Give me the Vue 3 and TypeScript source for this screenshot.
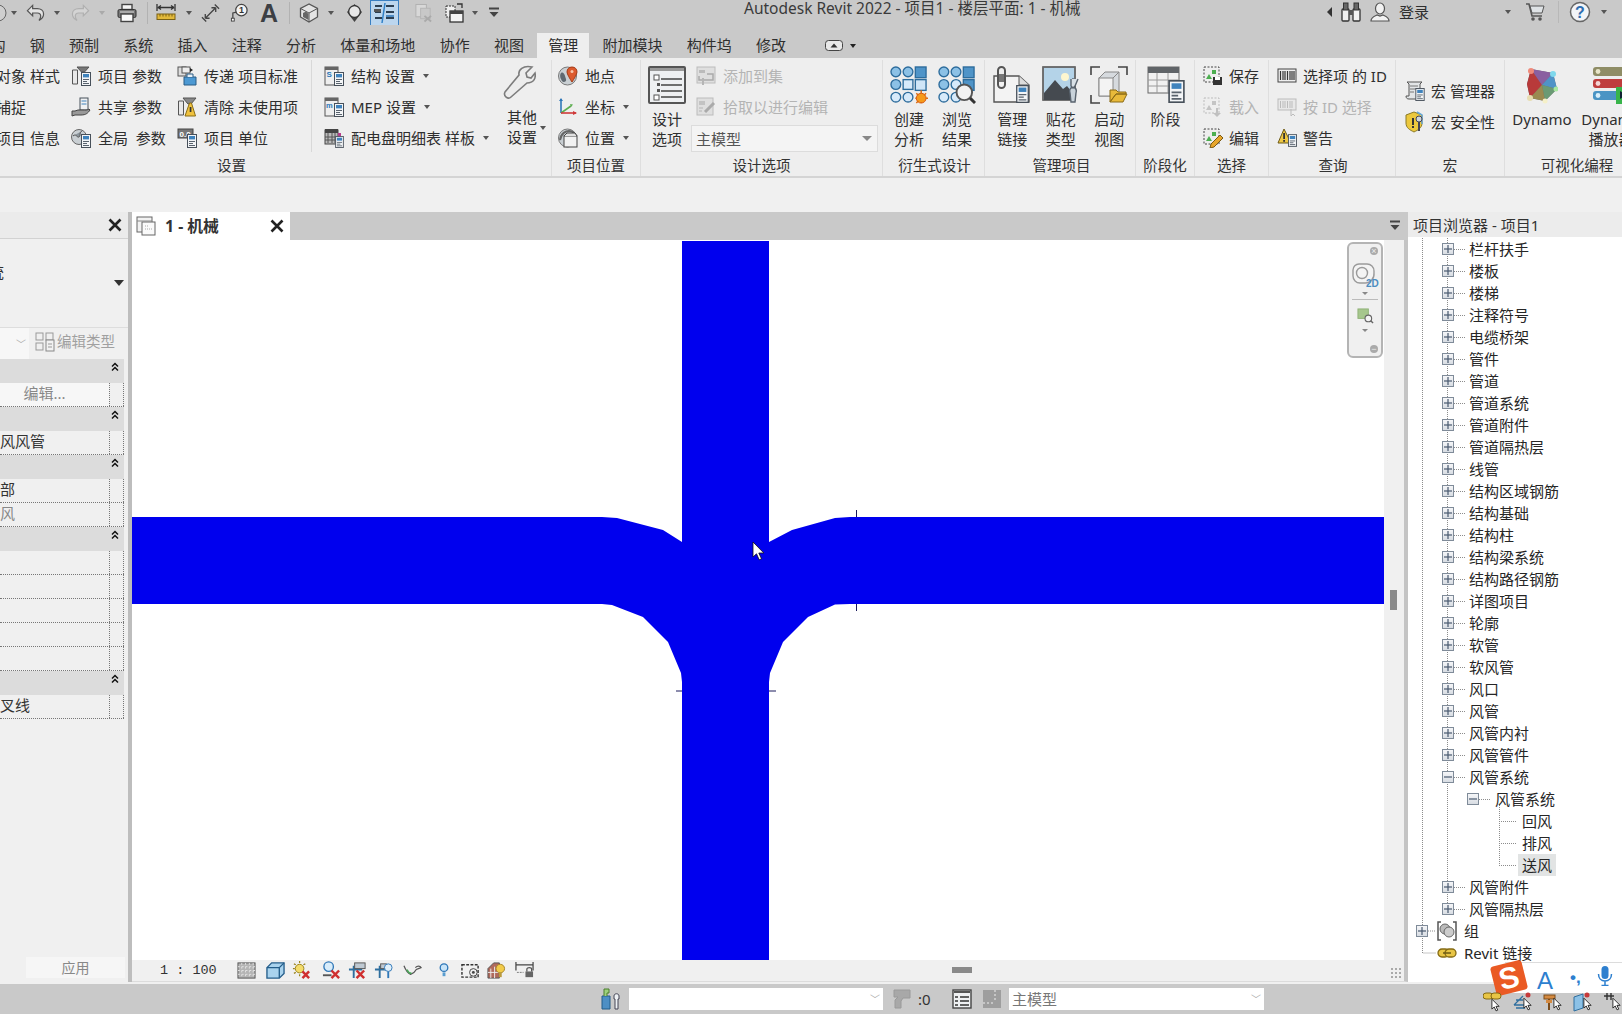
<script setup lang="ts">
interface Tool { ic: string; t: string; off?: boolean; caret?: boolean }
interface QItem { ic?: string; caret?: boolean; sep?: boolean; off?: boolean; ml: number; w?: number; active?: boolean }

const qat: QItem[] = [
  { ic: 'q-open', ml: -12, w: 20 }, { caret: true, ml: 3 },
  { ic: 'q-undo', ml: 9, w: 19 }, { caret: true, ml: 9 },
  { ic: 'q-redo', ml: 11, w: 19, off: true }, { caret: true, ml: 9, off: true },
  { ic: 'q-print', ml: 12, w: 20 }, { sep: true, ml: 10 },
  { ic: 'q-measure', ml: 8, w: 20 }, { caret: true, ml: 10 },
  { ic: 'q-dim', ml: 9, w: 19 }, { ic: 'q-tag', ml: 10, w: 19 }, { ic: 'q-a', ml: 11, w: 18 }, { sep: true, ml: 11 },
  { ic: 'q-house', ml: 9, w: 20 }, { caret: true, ml: 9 },
  { ic: 'q-sphere', ml: 12, w: 17 }, { ic: 'q-switch', ml: 7, w: 29, active: true },
  { ic: 'q-closed', ml: 15, w: 19, off: true }, { ic: 'q-win', ml: 12, w: 20 }, { caret: true, ml: 7 }, { ic: 'q-more', ml: 10, w: 12 }
]

const tabs = ['结构', '钢', '预制', '系统', '插入', '注释', '分析', '体量和场地', '协作', '视图', '管理', '附加模块', '构件坞', '修改']

const col1: Tool[] = [{ ic: 'i-proj', t: '项目 参数' }, { ic: 'i-share', t: '共享 参数' }, { ic: 'i-global', t: '全局  参数' }]
const col2: Tool[] = [{ ic: 'i-transfer', t: '传递 项目标准' }, { ic: 'i-purge', t: '清除 未使用项' }, { ic: 'i-units', t: '项目 单位' }]
const col3: Tool[] = [
  { ic: 'i-struct', t: '结构 设置', caret: true },
  { ic: 'i-mep', t: 'MEP 设置', caret: true },
  { ic: 'i-panel', t: '配电盘明细表 样板', caret: true }
]
const locs: Tool[] = [
  { ic: 'i-site', t: '地点' },
  { ic: 'i-coord', t: '坐标', caret: true },
  { ic: 'i-pos', t: '位置', caret: true }
]
const picks: Tool[] = [{ ic: 'i-sel-save', t: '保存' }, { ic: 'i-sel-load', t: '载入', off: true }, { ic: 'i-sel-edit', t: '编辑' }]
const query: Tool[] = [{ ic: 'i-bar', t: '选择项 的 ID' }, { ic: 'i-bar-off', t: '按 ID 选择', off: true }, { ic: 'i-warn', t: '警告' }]
const macros: Tool[] = [{ ic: 'i-macro', t: '宏 管理器' }, { ic: 'i-shield', t: '宏 安全性' }]

interface PropRow { head?: boolean; t?: string; btn?: boolean; dim?: boolean }
const props: PropRow[] = [
  { head: true }, { btn: true }, { head: true }, { t: '风风管' }, { head: true }, { t: '部' }, { t: '风', dim: true },
  { head: true }, {}, {}, {}, {}, {}, { head: true }, { t: '叉线' }
]

interface Node { t: string; lv: number; box?: string; ic?: string; sel?: boolean }
const plain = ['栏杆扶手', '楼板', '楼梯', '注释符号', '电缆桥架', '管件', '管道', '管道系统', '管道附件', '管道隔热层', '线管', '结构区域钢筋', '结构基础', '结构柱', '结构梁系统', '结构路径钢筋', '详图项目', '轮廓', '软管', '软风管', '风口', '风管', '风管内衬', '风管管件']
const tree: Node[] = [
  ...plain.map((t) => ({ t, lv: 1, box: '+' })),
  { t: '风管系统', lv: 1, box: '-' },
  { t: '风管系统', lv: 2, box: '-' },
  { t: '回风', lv: 3 }, { t: '排风', lv: 3 }, { t: '送风', lv: 3, sel: true },
  { t: '风管附件', lv: 1, box: '+' }, { t: '风管隔热层', lv: 1, box: '+' },
  { t: '组', lv: 0, box: '+', ic: 'i-group' },
  { t: 'Revit 链接', lv: 0, ic: 'i-link' }
]
const hDots = tree
  .map((n, i) => ({ n, y: 249.5 + 22 * i }))
  .filter((r) => r.n.lv === 1)
  .map((r) => r.y)

const viewIcons: { ic: string; ml: number }[] = [
  { ic: 'v-scale', ml: 21 }, { ic: 'v-cube', ml: 10 }, { ic: 'v-sun', ml: 7 }, { ic: 'v-shadow', ml: 11 },
  { ic: 'v-crop', ml: 7 }, { ic: 'v-crop2', ml: 7 }, { ic: 'v-glasses', ml: 10 }, { ic: 'v-bulb', ml: 17 },
  { ic: 'v-cam', ml: 12 }, { ic: 'v-house', ml: 7 }, { ic: 'v-dim', ml: 9 }
]
const trayIcons = ['t-link', 't-a', 't-b', 't-c', 't-d']
</script>

<template>
  <div class="app">
    <svg class="defs" aria-hidden="true">
      <defs>
        <symbol id="calc" viewBox="0 0 10 14"><rect x=".5" y=".5" width="9" height="13" fill="#f3f5f7" stroke="#47505a"/><rect x="2" y="2" width="6" height="3.4" fill="#3f83bd"/><path d="M2 7.5h6M2 9.5h4M2 11.5h6" stroke="#59636e"/></symbol>
        <symbol id="cur" viewBox="0 0 10 15"><path d="M1 1v11l2.600-2.300 2 4.300 1.900-.8-2-4.200h3.500z" fill="#fff" stroke="#222" stroke-width="1"/></symbol>
        <symbol id="x-mark" viewBox="0 0 14 14"><path d="M1.500 1.500l11 11M12.500 1.500l-11 11" stroke="#222" stroke-width="2.600" fill="none"/></symbol>
        <symbol id="chevs" viewBox="0 0 8 10"><path d="M1 4.500 4 1.500l3 3M1 8.500 4 5.500l3 3" stroke="#111" stroke-width="1.500" fill="none"/></symbol>

        <symbol id="q-open" viewBox="0 0 20 20"><circle cx="10" cy="10" r="8" fill="#cfcfcf" stroke="#666"/></symbol>
        <symbol id="q-undo" viewBox="0 0 20 20"><path d="M7 2 1.500 7.500 7 13v-3h5c2.500 0 3.500 1.700 3.500 3.500 0 1.700-.8 3-1.800 4.300 3-1.600 4.800-4 4.800-6.800C18.500 7.500 15.500 5.500 12 5.500H7z" fill="#e4e4e4" stroke="#555" stroke-width="1.300"/></symbol>
        <symbol id="q-redo" viewBox="0 0 20 20"><path d="M13 2l5.500 5.500L13 13v-3H8c-2.500 0-3.500 1.700-3.500 3.500 0 1.700.8 3 1.800 4.300-3-1.600-4.800-4-4.800-6.800C1.500 7.500 4.500 5.500 8 5.500h5z" fill="#d4d4d4" stroke="#b0b0b0" stroke-width="1.300"/></symbol>
        <symbol id="q-print" viewBox="0 0 20 20"><rect x="5" y="1.500" width="10" height="5" fill="#f6f6f6" stroke="#444" stroke-width="1.400"/><rect x="1" y="6.500" width="18" height="8" rx="1.500" fill="#777" stroke="#333"/><rect x="4" y="11" width="12" height="7.500" fill="#fafafa" stroke="#444" stroke-width="1.400"/><rect x="3" y="8.500" width="14" height="1" fill="#ddd"/></symbol>
        <symbol id="q-measure" viewBox="0 0 20 20"><path d="M1 1v7M19 1v7M2 4.500h16M2 4.500 5 2.500M2 4.500 5 6.500M18 4.500l-3-2M18 4.500l-3 2" stroke="#333" fill="none" stroke-width="1.300"/><rect x="1" y="11" width="18" height="5.500" fill="#e2b93b" stroke="#7a6115"/><path d="M4 11v2.500M7 11v2.500M10 11v2.500M13 11v2.500M16 11v2.500" stroke="#7a6115"/></symbol>
        <symbol id="q-dim" viewBox="0 0 20 20"><path d="M4.500 15.500l11-11M4.500 15.500h4.500M4.500 15.500V11M15.500 4.500H11M15.500 4.500V9M1 14.500l4.500 4.500M14.500 1 19 5.500" stroke="#444" fill="none" stroke-width="1.400"/></symbol>
        <symbol id="q-tag" viewBox="0 0 20 20"><circle cx="12" cy="7" r="6" fill="#f3f3f3" stroke="#444" stroke-width="1.300"/><text x="12" y="10.500" text-anchor="middle" font-size="9.500" font-weight="700" font-family="Liberation Sans" fill="#333">1</text><path d="M7 9 3 10v8" stroke="#444" fill="none" stroke-width="1.300"/><rect x="1.500" y="15.500" width="3" height="3" fill="#fff" stroke="#444"/></symbol>
        <symbol id="q-a" viewBox="0 0 18 20"><text x="9" y="19" text-anchor="middle" font-size="25" font-weight="700" font-family="Liberation Sans" fill="#3c3f44">A</text></symbol>
        <symbol id="q-house" viewBox="0 0 20 20"><path d="M10 1 1.500 5.500V14l8.500 5 8.500-5V5.500z" fill="#e4e4e4" stroke="#555" stroke-width="1.300"/><path d="M1.500 5.500 10 10l8.500-4.500M10 10v9" stroke="#555" fill="none"/><path d="M4 10l3-1.500 2.500 2.500v6L4 14z" fill="#666"/></symbol>
        <symbol id="q-sphere" viewBox="0 0 17 20"><path d="M8.500 1 16 9l-7.500 10L1 9z" fill="#444"/><circle cx="8.500" cy="8.500" r="5.800" fill="#e7e7e7" stroke="#333" stroke-width="1.300"/></symbol>
        <symbol id="q-switch" viewBox="0 0 29 25"><rect x=".5" y=".5" width="28" height="25" fill="#bcd6ee" stroke="#3a7fc1"/><path d="M5 6h7M5 12h6M5 18h7M16 6h8M16 12h8M16 18h8" stroke="#2c3f52" stroke-width="2"/><path d="M15 3l-3 20" stroke="#2f80c7" stroke-width="1.500"/><rect x="4" y="9" width="7" height="3" fill="#555"/><rect x="16" y="15" width="8" height="2" fill="#4e8bc3"/></symbol>
        <symbol id="q-closed" viewBox="0 0 20 20"><rect x="2" y="1" width="11" height="13" fill="#d8d8d8" stroke="#b0b0b0"/><rect x="7" y="5" width="10" height="11" fill="#c8c8c8" stroke="#b5b5b5"/><path d="M11 13l7 6M18 13l-7 6" stroke="#aaa" stroke-width="2"/></symbol>
        <symbol id="q-win" viewBox="0 0 20 20"><rect x="1" y="3" width="9" height="11" fill="#eee" stroke="#333" stroke-dasharray="2 1"/><rect x="5" y="8" width="13" height="11" fill="#f5f5f5" stroke="#333" stroke-width="1.300"/><rect x="5" y="8" width="13" height="3" fill="#444"/><path d="M12 1h5v4" stroke="#333" fill="none" stroke-width="1.300"/></symbol>
        <symbol id="q-more" viewBox="0 0 12 20"><path d="M1 5.500h10" stroke="#444" stroke-width="2"/><path d="M1.500 9h9L6 14z" fill="#444"/></symbol>
        <symbol id="t-collapse" viewBox="0 0 18 11"><rect x=".5" y=".5" width="17" height="10" rx="3" fill="#e8e8e8" stroke="#444"/><path d="M5.500 7.500 9 3.500l3.500 4z" fill="#333"/></symbol>

        <symbol id="i-proj" viewBox="0 0 20 20"><path d="M1.500 4v14h5V4z" fill="#e8e8e8" stroke="#555"/><path d="M6 1h12l-4.500 5H10.500z" fill="#777" stroke="#555"/><use href="#calc" x="10" y="6" width="10" height="14"/></symbol>
        <symbol id="i-share" viewBox="0 0 20 20"><rect x="9" y="1" width="8" height="12" fill="#eff1f3" stroke="#47505a"/><path d="M10.500 4h5M10.500 7h5" stroke="#3f83bd"/><path d="M1 14h3l3-1h5c2 0 4 .5 6-1l1 1c-2 3-4 5-9 5H4l-3 1z" fill="#999" stroke="#444"/></symbol>
        <symbol id="i-global" viewBox="0 0 20 20"><circle cx="8" cy="9" r="7.500" fill="#c9cfd3" stroke="#666"/><path d="M2 8c3-3 4 2 6 1s0-5 3-6" stroke="#555" fill="#8a949b"/><use href="#calc" x="10" y="6" width="10" height="14"/></symbol>
        <symbol id="i-transfer" viewBox="0 0 20 20"><rect x="1" y="1" width="8" height="9" fill="#ddd" stroke="#555"/><rect x="5" y="1" width="8" height="6" fill="#eee" stroke="#555"/><path d="M13 2l3 2-3 2z" fill="#222"/><path d="M7 11h12v8H7z" fill="#4c99d3" stroke="#2a5d85"/><path d="M10 11V8h6v3" fill="#e8f0f6" stroke="#2a5d85"/></symbol>
        <symbol id="i-purge" viewBox="0 0 20 20"><path d="M1.500 4v14h5V4z" fill="#e8e8e8" stroke="#555"/><path d="M6 1h13l-5 6h-3z" fill="#888" stroke="#555"/><path d="M12.500 6h2l4 13H8z" fill="#f0c23e" stroke="#8a6d14"/><rect x="12.700" y="10" width="1.700" height="5" fill="#333"/></symbol>
        <symbol id="i-units" viewBox="0 0 20 20"><rect x="1" y="1" width="15" height="9" fill="#777" stroke="#444"/><text x="2.500" y="8.500" font-size="8" font-weight="700" font-family="Liberation Sans" fill="#fff">0.0</text><use href="#calc" x="10" y="6" width="10" height="14"/></symbol>
        <symbol id="i-struct" viewBox="0 0 20 20"><rect x="1" y="1" width="13" height="18" fill="#eee" stroke="#555"/><rect x="1" y="1" width="13" height="3" fill="#666"/><text x="2.500" y="11" font-size="8" font-weight="700" font-family="Liberation Sans" fill="#2a77b8">S</text><use href="#calc" x="10" y="6" width="10" height="14"/></symbol>
        <symbol id="i-mep" viewBox="0 0 20 20"><rect x="1" y="1" width="13" height="18" fill="#eee" stroke="#555"/><rect x="1" y="1" width="13" height="3" fill="#666"/><text x="2" y="11" font-size="7.500" font-weight="700" font-family="Liberation Sans" fill="#2a77b8">m</text><use href="#calc" x="10" y="6" width="10" height="14"/></symbol>
        <symbol id="i-panel" viewBox="0 0 20 20"><rect x="1" y="2" width="13" height="14" fill="#bbb" stroke="#444"/><rect x="1" y="1" width="13" height="4" fill="#444"/><path d="M4 5v10M8 5v10M11 5v10M1 9h13M1 12h13" stroke="#555"/><rect x="14" y="5" width="3" height="6" fill="#b83c8c"/><use href="#calc" x="11" y="8" width="9" height="12"/></symbol>
        <symbol id="i-site" viewBox="0 0 20 20"><circle cx="9.500" cy="10" r="9" fill="#c9cfd3" stroke="#777"/><path d="M3 7c3-2 4 3 5 6s-3 4-4 2-3-5-1-8z" fill="#5f6870"/><path d="M14 1c3 0 5 2 5 5 0 2-3 7-5 10-2-3-5-8-5-10 0-3 2-5 5-5z" fill="#dc5a2e" stroke="#a33c18"/><circle cx="14" cy="5.500" r="1.500" fill="#f7c6ac"/></symbol>
        <symbol id="i-coord" viewBox="0 0 20 20"><path d="M3 2v14" stroke="#2f77b8" stroke-width="1.600"/><path d="M3 16l10-7" stroke="#5cae4f" stroke-width="1.600"/><path d="M3 16h15" stroke="#cf3a3a" stroke-width="1.600"/><path d="M1 4l2-3 2 3z" fill="#2f77b8"/><path d="M15 18l4-2-4-2z" fill="#cf3a3a"/><path d="M12 7l3 .5-2 2.500z" fill="#5cae4f"/></symbol>
        <symbol id="i-pos" viewBox="0 0 20 20"><circle cx="9.500" cy="10" r="9" fill="#c9cfd3" stroke="#777"/><path d="M2 12C3 5 8 3 11 3s6 2 7 6" fill="none" stroke="#666" stroke-width="2"/><rect x="6" y="8" width="13" height="11" fill="#f2f2f2" stroke="#444"/><path d="M6 8l3-3h8l2 3" fill="#e0e0e0" stroke="#444"/></symbol>
        <symbol id="l-options" viewBox="0 0 38 38"><rect x="1" y="1" width="36" height="36" rx="1" fill="#eef0f2" stroke="#555" stroke-width="2"/><rect x="2" y="2" width="34" height="3" fill="#9a9a9a"/><rect x="6" y="9" width="5" height="5" fill="#fff" stroke="#555"/><path d="M13 13h21M13 19h21M13 25h21M13 31h21" stroke="#444" stroke-width="1.400"/><rect x="9" y="17" width="3" height="3" fill="#555"/><rect x="9" y="23" width="3" height="3" fill="#555"/><rect x="6" y="29" width="5" height="5" fill="#fff" stroke="#555"/></symbol>
        <symbol id="i-addset" viewBox="0 0 20 20"><rect x="1" y="1" width="18" height="16" fill="#dfdfdf" stroke="#bcbcbc"/><rect x="3" y="4" width="6" height="3" fill="#bbb"/><path d="M11 8h6v6H3V10" stroke="#aaa" fill="none" stroke-width="1.500"/><path d="M7 12v7" stroke="#b5b5b5" stroke-width="2"/></symbol>
        <symbol id="i-pickedit" viewBox="0 0 20 20"><rect x="1" y="1" width="16" height="17" fill="#dfdfdf" stroke="#bcbcbc"/><rect x="3" y="4" width="6" height="4" fill="#c3c3c3"/><path d="M9 15 18 6" stroke="#aaa" stroke-width="3"/><path d="M3 11h4M3 14h3" stroke="#b5b5b5"/></symbol>
        <symbol id="l-grid-sun" viewBox="0 0 39 39"><g fill="#8cc1e6" stroke="#2d6c9c" stroke-width="1.400"><circle cx="6" cy="6" r="5"/><circle cx="18.500" cy="6" r="5"/><rect x="26" y="1" width="11" height="11" fill="#4f94c8"/><circle cx="6" cy="19" r="5"/><rect x="13.500" y="14" width="10" height="10" fill="#d7eafa"/><rect x="26" y="14" width="11" height="11" fill="#cfe5f7"/><circle cx="6" cy="32" r="5" fill="#d7eafa"/><circle cx="18.500" cy="32" r="5" fill="#d7eafa"/></g><circle cx="32" cy="33" r="5" fill="#f59a1b" stroke="#d8570e"/><g stroke="#dc6a10" stroke-width="1.500"><path d="M32 25v3M32 38v-1M26 33h1M37 33h2M27 28l2 2M37 28l-2 2M27 38l2-2"/></g></symbol>
        <symbol id="l-grid-lens" viewBox="0 0 39 39"><g fill="#8cc1e6" stroke="#2d6c9c" stroke-width="1.400"><circle cx="6" cy="6" r="5"/><circle cx="18.500" cy="6" r="5"/><rect x="26" y="1" width="11" height="11" fill="#4f94c8"/><circle cx="6" cy="19" r="5"/><circle cx="18.500" cy="19" r="5" fill="#d7eafa"/><rect x="26" y="14" width="11" height="11" fill="#4f94c8"/><circle cx="6" cy="32" r="5" fill="#d7eafa"/><circle cx="18.500" cy="32" r="5" fill="#d7eafa"/></g><circle cx="27" cy="27" r="8" fill="#f2f2f2" stroke="#555" stroke-width="2"/><path d="M33 33l5 5" stroke="#333" stroke-width="3"/></symbol>
        <symbol id="l-link" viewBox="0 0 38 38"><path d="M1 10h25l10 9v17H1z" fill="#f3f3f3" stroke="#555" stroke-width="1.400"/><path d="M26 10v9h10" fill="#ddd" stroke="#555"/><rect x="5" y="1" width="7" height="21" rx="3.500" fill="none" stroke="#555" stroke-width="2"/><rect x="6" y="8" width="5" height="8" fill="#777"/><use href="#calc" x="22" y="19" width="15" height="18"/></symbol>
        <symbol id="l-decal" viewBox="0 0 38 38"><rect x="1" y="1" width="32" height="33" fill="#b4d3e8" stroke="#555"/><rect x="1" y="1" width="32" height="33" fill="none" stroke="#666" stroke-width="1.600"/><circle cx="23" cy="11" r="4" fill="#fdf6cf"/><path d="M2 27 13 14l8 9 4-3 8 10v4H2z" fill="#454a50"/><path d="M31 12v9c-3 1-4 3-3 6l1 9h4l1-9c1-3 0-5-3-6v-9" fill="#c8d2da" stroke="#59636e" stroke-width="1.400"/><path d="M29 13v7l2 2 2-2 3-7" fill="#d8e0e6" stroke="#59636e" stroke-width="1.400"/></symbol>
        <symbol id="l-start" viewBox="0 0 38 38"><path d="M1 9V1h9M37 9V1h-9M1 29v8h9" fill="none" stroke="#444" stroke-width="1.600"/><path d="M9 12l6-6h14v24H9z" fill="#d6dade" stroke="#888"/><rect x="9" y="12" width="14" height="18" fill="#f3f3f3" stroke="#888"/><path d="M23 12l6-6" fill="none" stroke="#888"/><path d="M20 36V24h6l2 2h8v2H26l-6 8zM20 36h13l4-8H26z" fill="#e8b93a" stroke="#8a6a16"/></symbol>
        <symbol id="l-phase" viewBox="0 0 38 38"><rect x="1" y="1" width="31" height="26" fill="#f1f1f1" stroke="#666"/><rect x="1" y="1" width="31" height="6" fill="#606468"/><path d="M10 7v20M21 7v20M1 14h31M1 20h31" stroke="#9a9a9a"/><use href="#calc" x="21" y="14" width="17" height="23"/></symbol>
        <symbol id="i-sel-save" viewBox="0 0 20 20"><rect x="1" y="1" width="15" height="15" fill="none" stroke="#444" stroke-dasharray="2 1.500"/><path d="M3 13l3-5 3 5z" fill="#4caf50"/><rect x="9" y="4" width="4" height="4" fill="#4caf50"/><rect x="10" y="11" width="9" height="8" fill="#333"/><rect x="12" y="11" width="5" height="3" fill="#fff"/></symbol>
        <symbol id="i-sel-load" viewBox="0 0 20 20"><rect x="1" y="1" width="15" height="15" fill="none" stroke="#bbb" stroke-dasharray="2 1.500"/><path d="M3 13l3-5 3 5z" fill="#c4c4c4"/><rect x="9" y="4" width="4" height="4" fill="#c4c4c4"/><path d="M13 11v5h-3l4 4 4-4h-3v-5z" fill="#c0c0c0"/></symbol>
        <symbol id="i-sel-edit" viewBox="0 0 20 20"><rect x="1" y="1" width="15" height="15" fill="none" stroke="#444" stroke-dasharray="2 1.500"/><path d="M3 13l3-5 3 5z" fill="#4caf50"/><rect x="9" y="4" width="4" height="4" fill="#4caf50"/><path d="M17 7l3 3-9 9-4 1 1-4z" fill="#e7a62c" stroke="#7b5a14"/></symbol>
        <symbol id="i-bar" viewBox="0 0 20 20"><rect x="1" y="3" width="18" height="13" fill="#efefef" stroke="#444"/><path d="M3.500 5v9M6 5v9M8 5v9M10.500 5v9M13 5v9M15 5v9M17 5v9" stroke="#333" stroke-width="1.200"/></symbol>
        <symbol id="i-bar-off" viewBox="0 0 20 20"><rect x="1" y="2" width="18" height="11" fill="#e8e8e8" stroke="#bbb"/><path d="M3.500 4v7M6 4v7M8 4v7M10.500 4v7M13 4v7M15 4v7" stroke="#bbb"/><path d="M14 12v7l2-2 2 2" fill="none" stroke="#bbb"/></symbol>
        <symbol id="i-warn" viewBox="0 0 20 20"><path d="M7 1 1 15h13z" fill="#eec742" stroke="#6d5a16"/><rect x="6.200" y="5" width="1.800" height="6" fill="#333"/><rect x="6.200" y="12" width="1.800" height="1.800" fill="#333"/><use href="#calc" x="11" y="6" width="9" height="13"/></symbol>
        <symbol id="i-macro" viewBox="0 0 22 22"><path d="M3 2h15l-2 2v15H5c-2 0-3-1-3-3h3V4z" fill="#e2e5e7" stroke="#555"/><path d="M6 6h8M6 9h8M6 12h4" stroke="#777"/><use href="#calc" x="11" y="8" width="10" height="13"/></symbol>
        <symbol id="i-shield" viewBox="0 0 22 22"><path d="M10 1l8 3v8c0 5-4 7-8 9-4-2-8-4-8-9V4z" fill="#ecc83d" stroke="#8a7a28"/><path d="M13 1l5 3v9" fill="none" stroke="#69a8d6" stroke-width="1.500"/><circle cx="15" cy="8" r="3" fill="#cdd6dd" stroke="#445"/><path d="M15 11v9" stroke="#445" stroke-width="2"/><rect x="8" y="7" width="2" height="7" fill="#333"/><rect x="8" y="15" width="2" height="2" fill="#333"/></symbol>
        <symbol id="l-dynamo" viewBox="0 0 32 38"><path d="M5 3 27 7l4 16-12 12-15-3-3-14z" fill="#6f6e72"/><path d="M5 3 16 19 4 32 1 18z" fill="#b83a3a"/><path d="M5 3l22 4-11 12z" fill="#8a5fa0"/><path d="M27 7l4 16-15-4z" fill="#4f93c7"/><path d="M16 19l15 4-12 12z" fill="#6a9a74"/><path d="M16 19 19 35 4 32z" fill="#9a8a50"/><circle cx="5" cy="5" r="3" fill="#f08a7a"/><circle cx="27" cy="8" r="3" fill="#7fd8ec"/><circle cx="4" cy="32" r="3" fill="#e7ddb0"/><circle cx="19" cy="35" r="2.500" fill="#f5f0c8"/><circle cx="30" cy="23" r="2.500" fill="#a7e7a0"/></symbol>
        <symbol id="l-player" viewBox="0 0 38 38"><rect x="1" y="1" width="36" height="9" rx="3" fill="#8f8d66"/><circle cx="6" cy="5.500" r="2.400" fill="#e8e6c9"/><rect x="1" y="13" width="36" height="9" rx="3" fill="#bf3d3d"/><circle cx="6" cy="17.500" r="2.400" fill="#f4d4d4"/><rect x="1" y="25" width="26" height="9" rx="3" fill="#4a94c4"/><circle cx="6" cy="29.500" r="2.400" fill="#d8eefa"/><rect x="24" y="21" width="16" height="17" fill="#38b44a"/><path d="M28 25l7 4-7 4z" fill="#123"/></symbol>
        <symbol id="l-wrench" viewBox="0 0 34 36"><path d="M30 2l-6 6 1 4 4 1 4-5c1 5-1 10-8 10L9 32c-3 3-8-1-6-5L17 10c-1-5 4-10 13-8z" fill="#ececec" stroke="#7c7c7c" stroke-width="1.600"/></symbol>
        <symbol id="i-edittype" viewBox="0 0 20 20"><rect x="1" y="1" width="7" height="7" fill="none" stroke="#999"/><rect x="11" y="1" width="7" height="7" fill="none" stroke="#999"/><rect x="1" y="11" width="7" height="7" fill="none" stroke="#999"/><rect x="11" y="8" width="8" height="11" fill="#f2f2f2" stroke="#888"/><path d="M13 12h4M13 15h4" stroke="#999"/></symbol>
        <symbol id="i-view" viewBox="0 0 20 20"><rect x="1" y="1" width="15" height="15" fill="#f2f2f2" stroke="#666"/><rect x="6" y="6" width="13" height="13" fill="#fafafa" stroke="#666"/><path d="M1 5h15" stroke="#888"/><path d="M9 10h4M9 13h7" stroke="#aaa" stroke-dasharray="1 1"/></symbol>
        <symbol id="i-group" viewBox="0 0 20 20"><path d="M4 1H1v18h3M16 1h3v18h-3" fill="none" stroke="#555" stroke-width="1.500"/><circle cx="8" cy="8" r="5" fill="#bbb" stroke="#666"/><circle cx="12" cy="11" r="5" fill="#ccc" stroke="#666"/></symbol>
        <symbol id="i-link" viewBox="0 0 20 10"><rect x="1" y="1" width="11" height="8" rx="4" fill="#e8c545" stroke="#846a14" stroke-width="1.300"/><rect x="8" y="1" width="11" height="8" rx="4" fill="#e8c545" stroke="#846a14" stroke-width="1.300"/><path d="M6 5h8" stroke="#6d5a16" stroke-width="1.500"/></symbol>

        <symbol id="v-scale" viewBox="0 0 20 20"><rect x="1" y="2" width="18" height="16" fill="#b4b4b4" stroke="#555"/><path d="M1 6h18M1 10h18M1 14h18M5 2v16M9 2v16M13 2v16M17 2v16" stroke="#e4e4e4" stroke-dasharray="2 2"/></symbol>
        <symbol id="v-cube" viewBox="0 0 20 20"><path d="M1 7l5-5h13v11l-5 5H1z" fill="#a9d3ee" stroke="#235d8a" stroke-width="1.400"/><path d="M1 7h13l5-5M14 7v11" fill="none" stroke="#235d8a" stroke-width="1.400"/></symbol>
        <symbol id="v-sun" viewBox="0 0 20 20"><circle cx="8" cy="8" r="4.500" fill="#f4dc6b" stroke="#9a8420"/><path d="M8 0v2M1 8h2M8 14v2M14 3l-2 1M2 3l2 1M2 13l2-1" stroke="#9a8420" stroke-width="1.300"/><path d="M11 11l7 7M18 11l-7 7" stroke="#cf2f2f" stroke-width="2.600"/></symbol>
        <symbol id="v-shadow" viewBox="0 0 20 20"><circle cx="7" cy="6" r="5" fill="#d8ecfa" stroke="#2f77b8" stroke-width="1.400"/><path d="M1 15h9" stroke="#555" stroke-width="2"/><path d="M10 10l8 8M18 10l-8 8" stroke="#cf2f2f" stroke-width="2.600"/></symbol>
        <symbol id="v-crop" viewBox="0 0 20 20"><path d="M6 5v13M1 9h14" stroke="#2f6f9f" stroke-width="2"/><rect x="7" y="2" width="11" height="6" fill="#bfc9d2" stroke="#555"/><path d="M9 10l8 8M17 10l-8 8" stroke="#cf2f2f" stroke-width="2.600"/></symbol>
        <symbol id="v-crop2" viewBox="0 0 20 20"><path d="M6 5v13M1 9h14" stroke="#2f6f9f" stroke-width="2"/><rect x="7" y="3" width="6" height="5" fill="#bfc9d2" stroke="#555"/><circle cx="15" cy="7" r="4" fill="#e1eff9" stroke="#2f77b8"/><path d="M15 11v7" stroke="#2f77b8" stroke-width="2"/></symbol>
        <symbol id="v-glasses" viewBox="0 0 20 20"><path d="M1 5c2 5 4 8 7 9 3-1 5-3 6-5l5-2c-1-2-4-2-6 0" fill="none" stroke="#555" stroke-width="1.300"/><path d="M4 9c1 2 3 4 5 4" stroke="#4aa75a" stroke-width="1.600" fill="none"/></symbol>
        <symbol id="v-bulb" viewBox="0 0 10 20"><circle cx="5" cy="7" r="4" fill="#c8e4f8" stroke="#2f77b8" stroke-width="1.400"/><rect x="3.500" y="12" width="3" height="4" fill="#5a9ed0"/></symbol>
        <symbol id="v-cam" viewBox="0 0 20 20"><rect x="1" y="4" width="17" height="13" fill="none" stroke="#333" stroke-width="1.500" stroke-dasharray="3 1.500"/><circle cx="13" cy="12" r="4" fill="#efefef" stroke="#444"/><circle cx="13" cy="12" r="1.500" fill="#444"/></symbol>
        <symbol id="v-house" viewBox="0 0 20 20"><path d="M1 8l6-6h6v16H1z" fill="#b06a5c" stroke="#555"/><path d="M4 8v10M8 6v12M1 12h12" stroke="#eee"/><circle cx="14" cy="8" r="4.500" fill="#f2cb4a" stroke="#a7862a"/><rect x="12.500" y="12" width="3" height="5" fill="#b99a3e"/></symbol>
        <symbol id="v-dim" viewBox="0 0 20 20"><path d="M1 1v9M19 1v9M1 4h18" stroke="#444" stroke-width="1.300"/><path d="M2 12h7" stroke="#777" stroke-dasharray="2 1"/><rect x="11" y="11" width="8" height="6" fill="#666"/><path d="M12.500 11V8.500c0-2 5-2 5 0V11" fill="none" stroke="#555" stroke-width="1.300"/></symbol>
        <symbol id="s-tools" viewBox="0 0 22 22"><path d="M2 8h8v13H2z" fill="#4d8fc4" stroke="#235d8a"/><path d="M4 8V1h5v4H7v3" fill="#9ed17b" stroke="#4a7f2e"/><path d="M14 8c0-3 5-3 5 0v3h-1v10h-3V11h-1z" fill="#eef2f5" stroke="#445"/></symbol>
        <symbol id="s-filter" viewBox="0 0 20 20"><path d="M2 1h16v8h-7l-2 3v7H3V11l3-3H2z" fill="#a8a8a8" stroke="#9a9a9a"/></symbol>
        <symbol id="s-opt" viewBox="0 0 20 20"><rect x="1" y="1" width="18" height="18" fill="#eef0f2" stroke="#444" stroke-width="1.400"/><rect x="2" y="2" width="16" height="2" fill="#555"/><path d="M8 8h9M8 12h9M8 16h9M3 8h3M3 12h3M3 16h3" stroke="#333" stroke-width="1.400"/></symbol>
        <symbol id="s-exclude" viewBox="0 0 20 20"><rect x="1" y="1" width="18" height="18" fill="#9e9e9e"/><path d="M1 14h12M13 1v12" stroke="#eee" stroke-dasharray="2 2"/></symbol>
        <symbol id="t-link" viewBox="0 0 20 20"><rect x="0" y="1" width="10" height="6" rx="3" fill="#e8c545" stroke="#846a14"/><rect x="8" y="1" width="10" height="6" rx="3" fill="#e8c545" stroke="#846a14"/><use href="#cur" x="8" y="6" width="9" height="14"/></symbol>
        <symbol id="t-a" viewBox="0 0 20 20"><path d="M1 13 10 4M1 13h10M3 8h7M3 16h9" stroke="#2f6f9f" fill="none" stroke-width="1.300"/><circle cx="15" cy="3" r="2.500" fill="#c63a3a"/><use href="#cur" x="10" y="5" width="9" height="14"/></symbol>
        <symbol id="t-b" viewBox="0 0 20 20"><rect x="1" y="3" width="11" height="4" fill="#d58a40" stroke="#7c4c1a"/><path d="M6 7v11" stroke="#7c4c1a" stroke-width="2"/><rect x="3" y="8" width="6" height="3" fill="#d58a40"/><use href="#cur" x="10" y="5" width="9" height="14"/></symbol>
        <symbol id="t-c" viewBox="0 0 20 20"><path d="M1 5l9-3v14l-9 3z" fill="#8cc1e6" stroke="#2f6f9f"/><circle cx="14" cy="3" r="2.500" fill="#c63a3a"/><use href="#cur" x="10" y="5" width="9" height="14"/></symbol>
        <symbol id="t-d" viewBox="0 0 20 20"><path d="M1 4h10M4 1v7M8 1v7" stroke="#333" stroke-width="1.400"/><use href="#cur" x="9" y="5" width="9" height="14"/></symbol>
        <symbol id="r-binoc" viewBox="0 0 20 20"><rect x="1" y="7" width="7" height="12" rx="1" fill="#f2f2f2" stroke="#333" stroke-width="1.300"/><rect x="12" y="7" width="7" height="12" rx="1" fill="#f2f2f2" stroke="#333" stroke-width="1.300"/><rect x="2.500" y="1" width="4.500" height="7" fill="#666" stroke="#333"/><rect x="13" y="1" width="4.500" height="7" fill="#666" stroke="#333"/><rect x="8" y="8" width="4" height="5" fill="#555"/></symbol>
        <symbol id="r-user" viewBox="0 0 20 20"><ellipse cx="10" cy="6.500" rx="4.500" ry="5.500" fill="#f2f2f2" stroke="#555" stroke-width="1.200"/><path d="M1 19c0-4 4-5 6-6l3 1 3-1c2 1 6 2 6 6z" fill="#f2f2f2" stroke="#555" stroke-width="1.200"/></symbol>
        <symbol id="r-cart" viewBox="0 0 20 20"><path d="M1 2h3l3 12h10" fill="none" stroke="#555" stroke-width="1.600"/><path d="M5 4h14l-2 7H7z" fill="#dfe3e6" stroke="#555"/><circle cx="8" cy="17" r="1.800" fill="#555"/><circle cx="15" cy="17" r="1.800" fill="#555"/></symbol>
        <symbol id="r-help" viewBox="0 0 22 22"><circle cx="11" cy="11" r="9.500" fill="#f2f4f7" stroke="#666" stroke-width="1.500"/><text x="11" y="17" text-anchor="middle" font-size="16" font-weight="700" font-family="Liberation Sans" fill="#2d6db0">?</text></symbol>
      </defs>
    </svg>

    <header class="top">
      <div class="qat">
        <template v-for="(q, i) in qat" :key="i">
          <span v-if="q.sep" class="q-sep" :style="{ marginLeft: q.ml + 'px' }"></span>
          <span v-else-if="q.caret" class="caret" :class="{ off: q.off }" :style="{ marginLeft: q.ml + 'px' }"></span>
          <svg v-else class="q-ic" :class="{ tall: q.active }" :width="q.w" :height="q.active ? 25 : 20" :style="{ marginLeft: q.ml + 'px' }"><use :href="'#' + q.ic"/></svg>
        </template>
      </div>
      <div class="title">Autodesk Revit 2022 - 项目1 - 楼层平面: 1 - 机械</div>
      <div class="account">
        <span class="left-tri"></span>
        <svg class="ic20"><use href="#r-binoc"/></svg>
        <svg class="ic20 user"><use href="#r-user"/></svg>
        <span class="login">登录</span>
        <span class="caret login-caret"></span>
        <svg class="ic20 cart"><use href="#r-cart"/></svg>
        <span class="acc-sep"></span>
        <svg class="help"><use href="#r-help"/></svg>
        <span class="caret help-caret"></span>
      </div>
    </header>

    <nav class="tabs">
      <span v-for="t in tabs" :key="t" class="tab" :class="{ on: t === '管理' }">{{ t }}</span>
      <svg class="collapse"><use href="#t-collapse"/></svg>
      <span class="caret dark"></span>
    </nav>

    <section class="ribbon">
      <div class="panel p-settings">
        <div class="body">
          <div class="col c0">
            <div class="row end">对象 样式</div>
            <div class="row end snap">捕捉</div>
            <div class="row end">项目 信息</div>
          </div>
          <div class="col c1">
            <div v-for="r in col1" :key="r.t" class="row"><svg class="ic20"><use :href="'#' + r.ic"/></svg><span>{{ r.t }}</span></div>
          </div>
          <div class="col c2">
            <div v-for="r in col2" :key="r.t" class="row"><svg class="ic20"><use :href="'#' + r.ic"/></svg><span>{{ r.t }}</span></div>
          </div>
          <span class="vsep"></span>
          <div class="col c3">
            <div v-for="r in col3" :key="r.t" class="row"><svg class="ic20"><use :href="'#' + r.ic"/></svg><span>{{ r.t }}</span><span class="caret"></span></div>
          </div>
          <div class="wrench-col">
            <svg class="wrench"><use href="#l-wrench"/></svg>
            <div class="wrench-label"><span>其他<br>设置</span><span class="caret"></span></div>
          </div>
        </div>
        <div class="plabel">设置</div>
      </div>

      <div class="panel p-loc">
        <div class="body">
          <div class="col">
            <div v-for="r in locs" :key="r.t" class="row"><svg class="ic20"><use :href="'#' + r.ic"/></svg><span>{{ r.t }}</span><span v-if="r.caret" class="caret"></span></div>
          </div>
        </div>
        <div class="plabel">项目位置</div>
      </div>

      <div class="panel p-opt">
        <div class="body">
          <div class="big w-opt"><svg class="l38"><use href="#l-options"/></svg><span>设计<br>选项</span></div>
          <div class="col c-opt">
            <div class="row off"><svg class="ic20"><use href="#i-addset"/></svg><span>添加到集</span></div>
            <div class="row off"><svg class="ic20"><use href="#i-pickedit"/></svg><span>拾取以进行编辑</span></div>
            <div class="row"><div class="select"><span>主模型</span><span class="caret gray"></span></div></div>
          </div>
        </div>
        <div class="plabel">设计选项</div>
      </div>

      <div class="panel p-gen">
        <div class="body">
          <div class="big w48"><svg class="l38"><use href="#l-grid-sun"/></svg><span>创建<br>分析</span></div>
          <div class="big w48"><svg class="l38"><use href="#l-grid-lens"/></svg><span>浏览<br>结果</span></div>
        </div>
        <div class="plabel">衍生式设计</div>
      </div>

      <div class="panel p-man">
        <div class="body">
          <div class="big w49"><svg class="l38"><use href="#l-link"/></svg><span>管理<br>链接</span></div>
          <div class="big w49"><svg class="l38"><use href="#l-decal"/></svg><span>贴花<br>类型</span></div>
          <div class="big w49"><svg class="l38"><use href="#l-start"/></svg><span>启动<br>视图</span></div>
        </div>
        <div class="plabel">管理项目</div>
      </div>

      <div class="panel p-phase">
        <div class="body">
          <div class="big w-full"><svg class="l38"><use href="#l-phase"/></svg><span>阶段</span></div>
        </div>
        <div class="plabel">阶段化</div>
      </div>

      <div class="panel p-sel">
        <div class="body">
          <div class="col">
            <div v-for="r in picks" :key="r.t" class="row" :class="{ off: r.off }"><svg class="ic20"><use :href="'#' + r.ic"/></svg><span>{{ r.t }}</span></div>
          </div>
        </div>
        <div class="plabel">选择</div>
      </div>

      <div class="panel p-query">
        <div class="body">
          <div class="col">
            <div v-for="r in query" :key="r.t" class="row" :class="{ off: r.off }"><svg class="ic20"><use :href="'#' + r.ic"/></svg><span>{{ r.t }}</span></div>
          </div>
        </div>
        <div class="plabel">查询</div>
      </div>

      <div class="panel p-macro">
        <div class="body">
          <div class="col mid">
            <div v-for="r in macros" :key="r.t" class="row"><svg class="ic22"><use :href="'#' + r.ic"/></svg><span>{{ r.t }}</span></div>
          </div>
        </div>
        <div class="plabel">宏</div>
      </div>

      <div class="panel p-vis">
        <div class="body">
          <div class="big w-dyn"><svg class="l-dyn"><use href="#l-dynamo"/></svg><span>Dynamo</span></div>
          <div class="big w-play"><svg class="l38"><use href="#l-player"/></svg><span>Dynamo<br>播放器</span></div>
        </div>
        <div class="plabel">可视化编程</div>
      </div>
    </section>
    <div class="spacer"></div>

    <main class="work">
      <aside class="props">
        <div class="props-head"><svg class="xm"><use href="#x-mark"/></svg></div>
        <div class="type-box"><span class="type-t">统</span><span class="type-arrow"></span></div>
        <div class="type-row">
          <div class="type-select"><span class="chev">﹀</span></div>
          <svg class="ic20 faded"><use href="#i-edittype"/></svg>
          <span class="edit-type">编辑类型</span>
        </div>
        <div class="prop-list">
          <div v-for="(p, i) in props" :key="i" class="prop" :class="{ head: p.head }">
            <svg v-if="p.head" class="chevs"><use href="#chevs"/></svg>
            <template v-else>
              <div class="name" :class="{ dim: p.dim, btn: p.btn }">{{ p.btn ? '编辑...' : p.t }}</div>
              <div class="val"></div>
            </template>
          </div>
        </div>
        <div class="apply-wrap"><div class="apply">应用</div></div>
      </aside>

      <div class="center">
        <div class="doc-tabs">
          <div class="doc-tab">
            <svg class="ic20"><use href="#i-view"/></svg>
            <span class="doc-name">1 - 机械</span>
            <svg class="xm"><use href="#x-mark"/></svg>
          </div>
          <span class="doc-more"><svg width="12" height="20"><use href="#q-more"/></svg></span>
        </div>
        <div class="view-row">
          <div class="canvas">
            <svg class="duct" viewBox="132 240 1252 720" width="1252" height="720">
              <polygon fill="#0000ee" points="682,241 769,241 769,542 792,530 835,518 850,517 1384,517 1384,604 850,604 835,604.500 808,617 783,642 770,673 769,682 769,960 682,960 682,682 681,673 668,642 643,617 612,605 602,604 132,604 132,517 602,517 617,518 663,530 682,542"/>
              <path d="M856.500 510v7M856.500 604v7M676 691h6M769 691h7" stroke="#1a1a5c" stroke-width="1"/>
              <path d="M753 542v15l3.500-3.200 2.700 6 2.300-1-2.700-5.800h5z" fill="#fff" stroke="#111" stroke-width=".8"/>
            </svg>
            <div class="nav">
              <div class="nav-dot">×</div>
              <svg class="wheel" viewBox="0 0 28 25"><path d="M7 1h8a7 7 0 0 1 7 7v2a9 9 0 0 1-9 10H8a7 7 0 0 1-7-7V7a6 6 0 0 1 6-6z" fill="#f4f4f4" stroke="#9a9a9a" stroke-width="1.400"/><circle cx="10" cy="10" r="5.500" fill="none" stroke="#9a9a9a" stroke-width="1.400"/><text x="14" y="23.500" font-size="10" font-weight="700" font-family="Liberation Sans" fill="#4d8dc0">2D</text></svg>
              <span class="caret gray small"></span>
              <span class="nav-sep"></span>
              <svg class="zoomic" viewBox="0 0 18 18"><rect x="1" y="1" width="11" height="10" fill="#a6c78d" stroke="#8fb176"/><circle cx="12" cy="11" r="3.500" fill="#f4f4f4" stroke="#666" stroke-width="1.200"/><path d="M14.500 13.500 17 16" stroke="#666" stroke-width="1.500"/></svg>
              <span class="caret gray small"></span>
              <div class="nav-dot last">−</div>
            </div>
          </div>
          <div class="vscroll"><span class="vthumb"></span></div>
        </div>
        <div class="viewbar">
          <span class="scale">1 : 100</span>
          <svg v-for="v in viewIcons" :key="v.ic" class="v-ic" :class="{ thin: v.ic === 'v-bulb' }" :style="{ marginLeft: v.ml + 'px' }"><use :href="'#' + v.ic"/></svg>
          <span class="hthumb"></span>
          <span class="grip"></span>
        </div>
      </div>

      <aside class="browser">
        <div class="browser-head">项目浏览器 - 项目1</div>
        <div class="tree">
          <svg class="guides" width="214" height="745" viewBox="1408 237 214 745">
            <g stroke="#8c8c8c" stroke-dasharray="1 1" fill="none">
              <path d="M1422.500 238V953H1436M1428 931h8M1447.500 238V909M1499.500 805V865"/>
              <path v-for="y in hDots" :key="y" :d="`M1454 ${y}h12`"/>
              <path d="M1479 799.500h12M1499 821.500h18M1499 843.500h18M1499 865.500h18"/>
            </g>
          </svg>
          <div v-for="(n, i) in tree" :key="i" class="node" :class="'lv' + n.lv">
            <span v-if="n.box" class="box" :class="{ minus: n.box === '-' }"></span>
            <svg v-if="n.ic" class="node-ic" :class="n.ic"><use :href="'#' + n.ic"/></svg>
            <span class="node-t" :class="{ sel: n.sel }">{{ n.t }}</span>
          </div>
        </div>
      </aside>
    </main>

    <footer class="status">
      <svg class="ic22"><use href="#s-tools"/></svg>
      <div class="st-select first"><span class="chev">﹀</span></div>
      <svg class="ic20 s-f"><use href="#s-filter"/></svg>
      <span class="zero">:0</span>
      <svg class="ic20 s-o"><use href="#s-opt"/></svg>
      <svg class="ic20 s-e"><use href="#s-exclude"/></svg>
      <div class="st-select second"><span class="st-t">主模型</span><span class="chev">﹀</span></div>
    </footer>

    <div class="ime">
      <span class="ime-logo">S</span>
      <span class="ime-a">A</span>
      <span class="ime-p">•,</span>
      <svg class="ime-mic" viewBox="0 0 16 20"><rect x="4.500" y="0" width="7" height="13" rx="3.500" fill="#2d7fcf"/><path d="M1.500 8c0 4 2.500 7 6.500 7s6.500-3 6.500-7M8 15v4M4.500 19.500h7" stroke="#2d7fcf" stroke-width="1.500" fill="none"/></svg>
    </div>
    <div class="tray">
      <svg v-for="t in trayIcons" :key="t" class="ic20"><use :href="'#' + t"/></svg>
    </div>
  </div>
</template>

<style>
html, body { margin: 0; padding: 0; background: #c9c9c9; }
</style>

<style scoped>
.app { position: relative; width: 1622px; height: 1014px; overflow: hidden; display: flex; flex-direction: column; background: #c9c9c9; color: #2f2f2f; font-family: "Noto Sans", "Noto Sans CJK SC", sans-serif; font-size: 15px; line-height: 20px; }
.defs { position: absolute; width: 0; height: 0; }
.ic20 { width: 20px; height: 20px; flex: none; }
.ic22 { width: 22px; height: 22px; flex: none; }
.xm { width: 14px; height: 14px; flex: none; }
.caret { display: inline-block; width: 0; height: 0; border-left: 3px solid transparent; border-right: 3px solid transparent; border-top: 4px solid #555; flex: none; }
.caret.off { border-top-color: #aaa; }
.caret.dark { border-top-color: #222; margin-left: 6px; }
.caret.gray { border-top-color: #888; }

.top { height: 33px; display: flex; background: #c9c9c9; flex: none; position: relative; }
.qat { width: 744px; height: 25px; display: flex; align-items: center; overflow: hidden; flex: none; }
.q-ic { flex: none; }
.q-sep { width: 1px; height: 22px; background: #b2b2b2; flex: none; }
.title { width: 470px; height: 16px; line-height: 16px; flex: none; font-size: 15.500px; color: #3a3a3a; white-space: nowrap; }
.account { display: flex; align-items: center; height: 24px; flex: 1; }
.left-tri { width: 0; height: 0; border-top: 5px solid transparent; border-bottom: 5px solid transparent; border-right: 5px solid #333; margin-left: 113px; }
.left-tri + .ic20 { margin-left: 9px; }
.user { margin-left: 9px; }
.login { margin-left: 9px; width: 30px; white-space: nowrap; }
.login-caret { margin-left: 76px; }
.cart { margin-left: 14px; }
.acc-sep { width: 1px; height: 22px; background: #b8b8b8; margin-left: 13px; }
.help { width: 22px; height: 22px; margin-left: 10px; flex: none; }
.help-caret { margin-left: 10px; }

.tabs { height: 25px; flex: none; display: flex; align-items: center; margin-left: -24.500px; overflow: visible; gap: 24.250px; background: #c9c9c9; }
.tab { white-space: nowrap; height: 25px; line-height: 25px; font-size: 15px; }
.tab.on { background: #eeeeee; margin: 0 -11px; padding: 0 11px; }
.collapse { width: 18px; height: 11px; margin-left: 15px; }
.collapse + .caret { margin-left: -17px; }

.ribbon { height: 120px; flex: none; display: flex; background: #eeeeee; border-bottom: 2px solid #d4d4d4; overflow: hidden; box-sizing: border-box; }
.panel { flex: none; display: flex; flex-direction: column; border-right: 1px solid #dedede; box-sizing: border-box; height: 116px; margin-top: 2px; }
.body { height: 93px; flex: none; display: flex; }
.plabel { height: 24px; line-height: 25px; text-align: center; white-space: nowrap; font-size: 14.500px; color: #333; }
.col { display: flex; flex-direction: column; flex: none; }
.col.mid { justify-content: center; }
.row { height: 31px; display: flex; align-items: center; white-space: pre; flex: none; }
.row > svg { margin-right: 7px; }
.row .caret { margin-left: 8px; }
.row.end { justify-content: flex-end; }
.row.snap { padding-right: 34px; }
.off { color: #b4b4b4; }

.p-settings { width: 552px; }
.p-settings .plabel { padding-right: 88px; }
.c0 { width: 60px; }
.c1 { width: 106px; margin-left: 11px; }
.c2 { width: 134px; }
.vsep { width: 1px; height: 92px; background: #d8d8d8; flex: none; }
.c3 { width: 178px; margin-left: 12px; }
.wrench-col { display: flex; flex-direction: column; flex: none; width: 49px; }
.wrench { width: 34px; height: 36px; margin-top: 5px; }
.wrench-label { display: flex; align-items: center; margin: 6px 0 0 5px; gap: 3px; line-height: 20px; }
.wrench-label .caret { margin-top: 2px; }

.p-loc { width: 89px; padding-left: 6px; }
.p-loc .row .caret { margin-left: 8px; }
.p-loc .plabel { margin-left: -6px; }
.p-opt { width: 242px; }
.w-opt { width: 52px; }
.c-opt { margin-left: 0; padding-left: 3px; }
.select { width: 187px; height: 27px; margin: 2px 0 0 -5px; box-sizing: border-box; background: #f4f4f4; border: 1px solid #dcdcdc; display: flex; align-items: center; justify-content: space-between; padding: 0 5px 0 4px; color: #555; }
.select .caret { border-left-width: 5px; border-right-width: 5px; border-top-width: 5px; }
.big { display: flex; flex-direction: column; align-items: center; text-align: center; flex: none; padding-top: 6px; white-space: nowrap; }
.big > span { margin-top: 3px; line-height: 20px; }
.l38 { width: 38px; height: 38px; flex: none; margin-bottom: 2px; }
.p-gen { width: 102px; padding-left: 2px; }
.w48 { width: 48px; }
.p-man { width: 151px; padding-left: 3px; }
.w49 { width: 48.500px; }
.p-phase { width: 59px; }
.w-full { width: 59px; }
.p-sel { width: 74px; padding-left: 8px; }
.p-sel .plabel { padding-right: 8px; }
.p-sel .row > svg, .p-query .row > svg { margin-right: 6px; }
.p-query { width: 127px; padding-left: 8px; }
.p-query .plabel { padding-right: 6px; }
.p-macro { width: 109px; padding-left: 8px; }
.p-macro .plabel { padding-right: 8px; }
.p-macro .row > svg { margin-right: 5px; }
.p-vis { width: 117px; border-right: none; overflow: visible; }
.p-vis .plabel { width: 144px; }
.w-dyn { width: 74px; }
.l-dyn { width: 32px; height: 38px; margin-bottom: 2px; }
.w-play { width: 76px; margin-left: -6px; }

.spacer { height: 34px; flex: none; background: #f0f0f0; }

.work { height: 770px; flex: none; display: flex; }
.props { width: 128px; flex: none; background: #f0f0f0; border-right: 4px solid #bdbdbd; display: flex; flex-direction: column; overflow: hidden; }
.props-head { height: 26px; flex: none; background: #ebebeb; border-bottom: 1px solid #d2d2d2; display: flex; justify-content: flex-end; align-items: center; padding-right: 6px; }
.type-box { height: 88px; flex: none; border-bottom: 1px solid #dddddd; display: flex; align-items: center; justify-content: space-between; padding-right: 4px; }
.type-t { margin: -22px 0 0 -11px; }
.type-arrow { width: 0; height: 0; border-left: 5px solid transparent; border-right: 5px solid transparent; border-top: 6px solid #333; }
.type-row { height: 31px; flex: none; display: flex; align-items: center; }
.type-select { width: 29px; height: 31px; background: #f7f7f7; display: flex; align-items: center; justify-content: flex-end; }
.chev { color: #aaa; font-size: 10px; font-family: "Noto Sans CJK SC", sans-serif; padding-right: 3px; }
.faded { margin: -3px 0 0 6px; }
.edit-type { margin: -6px 0 0 2px; font-size: 14.500px; color: #a0a0a0; white-space: nowrap; }
.prop-list { flex: none; width: 124px; }
.prop { height: 24px; box-sizing: border-box; display: flex; border-bottom: 1px dotted #777; }
.prop.head { background: #dcdcdc; border-bottom: none; justify-content: flex-end; }
.chevs { width: 8px; height: 10px; margin: 3px 5px 0 0; flex: none; }
.name { width: 109px; flex: none; box-sizing: border-box; line-height: 20px; white-space: nowrap; color: #333; }
.name.dim { color: #888; }
.name.btn { background: #f7f7f7; text-align: center; color: #888; padding-right: 20px; }
.val { flex: 1; border-left: 1px dotted #777; border-right: 1px dotted #777; }
.apply-wrap { margin-top: auto; padding: 0 3px 4px 26px; }
.apply { height: 21px; line-height: 21px; background: #f6f6f6; text-align: center; color: #888; font-size: 14px; }

.center { flex: 1; min-width: 0; display: flex; flex-direction: column; }
.doc-tabs { height: 28px; flex: none; display: flex; background: #c9c9c9; }
.doc-tab { width: 158px; height: 28px; background: #fff; display: flex; align-items: center; flex: none; padding-left: 4px; box-sizing: border-box; }
.doc-name { font-weight: 700; margin-left: 9px; font-size: 15.800px; color: #333; width: 105px; white-space: nowrap; }
.doc-more { margin-left: auto; padding-right: 7px; height: 28px; display: flex; align-items: center; }
.view-row { flex: 1; min-height: 0; display: flex; }
.canvas { position: relative; width: 1252px; flex: none; background: #fff; }
.duct { display: block; }
.nav { position: absolute; top: 2px; right: 1px; width: 32px; height: 112px; box-sizing: content-box; border: 2px solid #b4b4b4; border-radius: 6px; background: #f0f0f0; display: flex; flex-direction: column; align-items: center; }
.nav-dot { width: 8px; height: 8px; border-radius: 50%; background: #aaa; color: #eee; font-size: 9px; line-height: 8px; text-align: center; align-self: flex-end; margin: 3px 3px 0 0; font-family: "Liberation Sans", sans-serif; }
.nav-dot.last { margin-top: auto; margin-bottom: 3px; }
.wheel { width: 28px; height: 25px; margin-top: 8px; margin-left: 2px; }
.caret.small { margin-top: 4px; border-left-width: 3px; border-right-width: 3px; border-top-width: 3px; }
.nav-sep { width: 26px; height: 1px; background: #bbb; margin-top: 4px; }
.zoomic { width: 17px; height: 17px; margin-top: 8px; }
.vscroll { flex: none; background: #f0f0f0; border-right: 4px solid #c4c4c4; padding-top: 350px; box-sizing: border-box; width: 24px; }
.vthumb { display: block; width: 7px; height: 20px; background: #8a8a8a; margin-left: 6px; }
.viewbar { height: 22px; flex: none; display: flex; align-items: center; background: #f0f0f0; border-bottom: 1px solid #dcdcdc; box-sizing: border-box; padding-left: 28px; border-right: 4px solid #c4c4c4; }
.scale { font-family: "Liberation Mono", monospace; font-size: 13.500px; white-space: pre; width: 56px; color: #333; flex: none; }
.v-ic { width: 19px; height: 19px; flex: none; }
.v-ic.thin { width: 10px; }
.hthumb { width: 20px; height: 6px; background: #8a8a8a; margin-left: 418px; flex: none; margin-top: -2px; }
.grip { width: 12px; height: 12px; margin-left: auto; margin-right: 2px; background: radial-gradient(circle, #aaa 1.200px, transparent 1.400px) 0 0 / 4px 4px; align-self: flex-end; margin-bottom: 2px; }

.browser { width: 214px; flex: none; background: #fff; display: flex; flex-direction: column; overflow: hidden; }
.browser-head { height: 25px; line-height: 26px; background: #ececec; padding-left: 5px; flex: none; white-space: nowrap; color: #333; }
.tree { position: relative; padding-top: 1px; flex: 1; min-height: 0; overflow: hidden; }
.guides { position: absolute; left: 0; top: 0; }
.node { position: relative; height: 22px; display: flex; align-items: center; white-space: nowrap; color: #262626; }
.lv1 { padding-left: 34px; }
.lv2 { padding-left: 59px; }
.lv3 { padding-left: 114px; }
.lv0 { padding-left: 8px; }
.box { width: 12px; height: 12px; box-sizing: border-box; border: 1px solid #7f8b99; background: linear-gradient(#f5f6f8, #d8dde3); flex: none; position: relative; margin-right: 15px; }
.box::before { content: ""; position: absolute; left: 1px; right: 1px; top: 4px; height: 2px; background: #4a5a70; transform: scaleY(.6); }
.box::after { content: ""; position: absolute; top: 1px; bottom: 1px; left: 4px; width: 2px; background: #4a5a70; transform: scaleX(.6); }
.box.minus::after { display: none; }
.lv2 .box { margin-right: 16px; }
.lv0 .box { margin-right: 9px; }
.node-ic { flex: none; margin-right: 7px; }
.i-group { width: 20px; height: 20px; }
.i-link { width: 20px; height: 10px; margin-left: 21px; }
.node-t { padding: 0; line-height: 22px; }
.node-t.sel { background: #e2e4e4; padding: 0 4px; margin-left: -4px; }

.status { height: 32px; flex: none; display: flex; align-items: center; padding-left: 600px; background: #c9c9c9; border-top: 2px solid #f0f0f0; box-sizing: border-box; }
.st-select { height: 22px; background: #fff; display: flex; align-items: center; justify-content: space-between; flex: none; box-sizing: border-box; }
.st-select.first { width: 254px; margin-left: 7px; justify-content: flex-end; }
.st-select.second { width: 255px; margin-left: 7px; }
.st-t { color: #777; padding-left: 3px; }
.s-f { margin-left: 9px; }
.zero { margin-left: 6px; width: 30px; color: #333; }
.s-o { margin-left: 4px; }
.s-e { margin-left: 10px; }

.ime { position: absolute; left: 1505px; top: 962px; width: 117px; height: 30px; background: #fff; border-top: 1px solid #dcdcdc; }
.ime-logo { position: absolute; left: -12px; top: 0; width: 32px; height: 30px; background: #ea5a24; border-radius: 3px; transform: rotate(-14deg); color: #fff; font: 700 30px/29px "Liberation Sans", sans-serif; text-align: center; }
.ime-a { position: absolute; left: 32px; top: 6px; font: 400 24px/24px "Liberation Sans", sans-serif; color: #2d7fcf; }
.ime-p { position: absolute; left: 65px; top: 3px; font: 700 17px/24px "Liberation Sans", sans-serif; color: #2d7fcf; }
.ime-mic { position: absolute; left: 92px; top: 3px; width: 16px; height: 20px; }
.tray { position: absolute; left: 1483px; top: 992px; display: flex; gap: 10px; }
</style>
